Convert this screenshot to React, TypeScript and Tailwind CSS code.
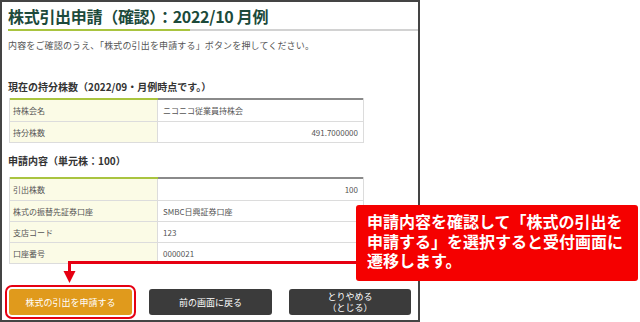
import React from "react";

const jp = "font-['Noto_Sans_CJK_JP','Noto_Sans',sans-serif]";

type Row = { label: string; value: string; right?: boolean };

const holdings: Row[] = [
  { label: "持株会名", value: "ニコニコ従業員持株会" },
  { label: "持分株数", value: "491.7000000", right: true },
];

const request: Row[] = [
  { label: "引出株数", value: "100", right: true },
  { label: "株式の振替先証券口座", value: "SMBC日興証券口座" },
  { label: "支店コード", value: "123" },
  { label: "口座番号", value: "0000021" },
];

const InfoTable = ({ rows }: { rows: Row[] }) => (
  <div className="w-[355px] border-x border-b border-[#dcdcdc]">
    <div className="flex h-[2px]">
      <div className="w-[148px] bg-[#a9c43f]" />
      <div className="flex-1 bg-[#8a8a8a]" />
    </div>
    {rows.map((r, i) => (
      <div
        key={r.label}
        className={`flex h-[21px] text-[8px] leading-[21px] text-[#555] ${
          i > 0 ? "border-t border-[#dcdcdc]" : ""
        }`}
      >
        <div className="w-[148px] shrink-0 bg-[#fbfbe6] pl-[3px] border-r border-[#dcdcdc]">
          {r.label}
        </div>
        <div className={`flex-1 px-[5px] ${r.right ? "text-right" : ""}`}>{r.value}</div>
      </div>
    ))}
  </div>
);

export default function App() {
  return (
    <div className={`relative w-[640px] h-[322px] bg-white overflow-hidden ${jp}`}>
      <div className="w-[420px] h-[322px] border-2 border-[#444] box-border flex flex-col">
        {/* title */}
        <div className="h-[27px] pl-[6px] pt-[3px] text-[16px] leading-[22px] font-bold text-[#1c4a3b] tracking-[-0.3px] whitespace-nowrap">
          株式引出申請（確認）：2022/10 月例
        </div>
        <div className="flex h-[2px] pl-[6px]">
          <div className="w-[182px] bg-[#a9c43f]" />
          <div className="flex-1 bg-[#d2d2d2]" />
        </div>

        <div className="pl-[7px] flex flex-col">
          <p className="mt-[9px] ml-[-1px] text-[9px] leading-[12px] text-[#555] tracking-[0.15px] whitespace-nowrap">
            内容をご確認のうえ、「株式の引出を申請する」ボタンを押してください。
          </p>

          <h2 className="mt-[28px] ml-[-1px] text-[10px] leading-[14px] font-bold text-[#333]">
            現在の持分株数（2022/09・月例時点です。）
          </h2>
          <div className="mt-[4px]">
            <InfoTable rows={holdings} />
          </div>

          <h2 className="mt-[11px] ml-[-1px] text-[10px] leading-[14px] font-bold text-[#333]">
            申請内容（単元株：100）
          </h2>
          <div className="mt-[9px]">
            <InfoTable rows={request} />
          </div>

          {/* buttons */}
          <div className="mt-[25px] flex gap-[17px]">
            <button className="w-[123px] h-[26px] rounded-[3px] bg-[#e09a1c] text-white text-[9px] leading-[11px] outline-2 outline-offset-2 outline-[#e60012]">
              株式の引出を申請する
            </button>
            <button className="w-[123px] h-[26px] rounded-[3px] bg-[#3b3b3b] text-white text-[9px] leading-[11px]">
              前の画面に戻る
            </button>
            <button className="w-[122px] h-[26px] rounded-[3px] bg-[#3b3b3b] text-white text-[9px] leading-[11px]">
              とりやめる
              <br />
              （とじる）
            </button>
          </div>
        </div>
      </div>

      {/* arrow */}
      <svg className="absolute left-0 top-0" width="640" height="322" viewBox="0 0 640 322">
        <path d="M360 262.5 H69.5 V272" fill="none" stroke="#e60012" strokeWidth="3" />
        <path d="M63.5 271 L75.5 271 L69.5 283 Z" fill="#e60012" />
      </svg>

      {/* callout */}
      <div className="absolute left-[356px] top-[205px] w-[282px] h-[76px] rounded-[3px] bg-[#f50000] pl-[11px] pt-[7px] text-white text-[16px] leading-[19.5px] font-bold whitespace-nowrap">
        申請内容を確認して「株式の引出を
        <br />
        申請する」を選択すると受付画面に
        <br />
        遷移します。
      </div>
    </div>
  );
}
